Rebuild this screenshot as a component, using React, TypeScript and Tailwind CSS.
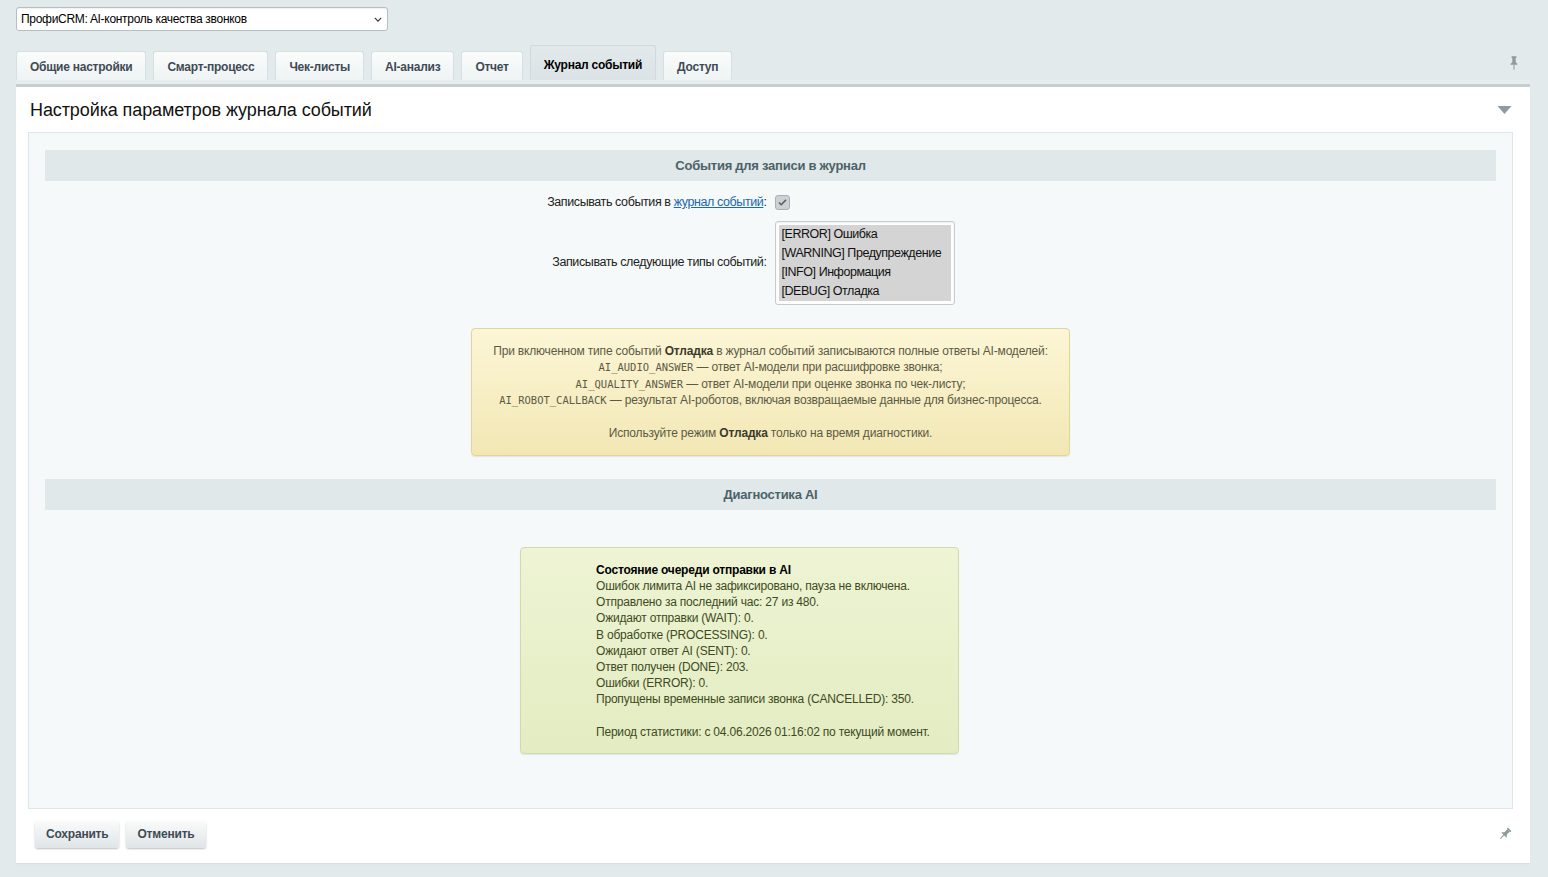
import React from "react";

const tabs = [
  "Общие настройки",
  "Смарт-процесс",
  "Чек-листы",
  "AI-анализ",
  "Отчет",
  "Журнал событий",
  "Доступ",
];

const eventTypes = [
  "[ERROR] Ошибка",
  "[WARNING] Предупреждение",
  "[INFO] Информация",
  "[DEBUG] Отладка",
];

const queueLines = [
  "Ошибок лимита AI не зафиксировано, пауза не включена.",
  "Отправлено за последний час: 27 из 480.",
  "Ожидают отправки (WAIT): 0.",
  "В обработке (PROCESSING): 0.",
  "Ожидают ответ AI (SENT): 0.",
  "Ответ получен (DONE): 203.",
  "Ошибки (ERROR): 0.",
  "Пропущены временные записи звонка (CANCELLED): 350.",
];

function PinIcon({ className }: { className?: string }) {
  return (
    <svg viewBox="0 0 12 16" className={className} fill="currentColor">
      <rect x="3" y="0" width="6" height="2" rx="0.5" />
      <path d="M4 2h4v5l2 2v1H2V9l2-2z" />
      <rect x="5.4" y="10" width="1.2" height="6" />
    </svg>
  );
}

function SectionHeader({ title }: { title: string }) {
  return (
    <div className="flex h-[31px] items-center justify-center bg-[#e0e8ea] text-[13px] font-bold tracking-[-0.25px] text-[#4b6267]">
      {title}
    </div>
  );
}

const mono = "font-['DejaVu_Sans_Mono',monospace] text-[10.5px] tracking-normal";

export default function App() {
  return (
    <div className="min-h-screen bg-[#e3eaec] pl-4 pr-[18px] pt-[7px] pb-[15px] font-['Liberation_Sans',Arial,sans-serif] text-[#000]">
      {/* module selector */}
      <div className="relative flex h-[24px] w-[372px] items-center rounded-[3px] border border-[#b5bfc3] bg-white pl-[4px] text-[12px] shadow-[inset_0_1px_1px_rgba(0,0,0,0.06)]">
        <span className="tracking-[-0.3px]">ПрофиCRM: AI-контроль качества звонков</span>
        <svg viewBox="0 0 10 6" className="absolute right-[5px] top-[9px] h-[5px] w-[8px] text-[#333]" fill="none" stroke="currentColor" strokeWidth="1.4">
          <path d="M1 1l4 4 4-4" />
        </svg>
      </div>

      {/* tabs */}
      <div className="mt-[14px] flex items-end">
        <div className="flex items-end gap-[7px]">
          {tabs.map((t) => {
            const active = t === "Журнал событий";
            return (
              <div
                key={t}
                className={
                  active
                    ? "flex h-[35px] items-center rounded-t-[3px] border border-b-0 border-[#d0d9dc] bg-gradient-to-b from-[#e3e9eb] to-[#dbe3e6] px-[13px] pt-[4px] text-[12px] font-bold tracking-[-0.25px] text-black"
                    : "flex h-[29px] items-center rounded-t-[3px] border border-b-0 border-[#d6dfe2] bg-gradient-to-b from-[#fbfcfc] to-[#eef3f4] px-[13px] pt-[1px] text-[12px] font-bold tracking-[-0.25px] text-[#3f4b54]"
                }
              >
                {t}
              </div>
            );
          })}
        </div>
        <div className="flex-1" />
        <PinIcon className="mb-[10px] mr-[11px] h-[14px] w-[10px] text-[#8d999d]" />
      </div>

      {/* main panel */}
      <div className="h-[4px] bg-[#e8eef0]" />
      <div className="border-t-[3px] border-[#c5cfd2] bg-white pb-[15px] shadow-[0_1px_1px_rgba(0,0,0,0.05)]">
        <div className="flex items-center justify-between pl-[14px] pr-[18px] pt-[11px] pb-[10px]">
          <h1 className="text-[18px] leading-[24px] tracking-[-0.1px] text-[#111]">
            Настройка параметров журнала событий
          </h1>
          <svg viewBox="0 0 14 8" className="h-[8px] w-[15px] text-[#8e9ba0]" fill="currentColor">
            <path d="M0 0h14L7 8z" />
          </svg>
        </div>

        <div className="mx-[12px] mr-[17px] border border-[#dde6e8] bg-[#f5f9f9] px-[16px] pt-[17px] pb-[54px]">
          <SectionHeader title="События для записи в журнал" />

          <div className="mt-[12px] grid grid-cols-[1fr_1fr] items-center gap-x-[8px] text-[12.5px] tracking-[-0.4px] text-[#222]">
            <div className="text-right">
              Записывать события в{" "}
              <a href="#" className="text-[#2067b0] underline">
                журнал событий
              </a>
              :
            </div>
            <div className="flex items-center">
              <span className="flex h-[15px] w-[15px] items-center justify-center rounded-[3px] border border-[#a9b1b4] bg-[#cdd1d3]">
                <svg viewBox="0 0 10 8" className="h-[7px] w-[9px] text-[#555c60]" fill="none" stroke="currentColor" strokeWidth="1.7">
                  <path d="M1 4l2.5 2.5L9 1" />
                </svg>
              </span>
            </div>

            <div className="mt-[9px] text-right">Записывать следующие типы событий:</div>
            <div className="mt-[9px]">
              <div className="w-[180px] rounded-[3px] border border-[#c5ccce] bg-white p-[3px] shadow-[inset_0_1px_2px_rgba(0,0,0,0.08)]">
                <div className="whitespace-nowrap bg-[#d4d4d4] pl-[3px] text-[12.5px] leading-[19px] tracking-[-0.45px] text-[#111]">
                  {eventTypes.map((e) => (
                    <div key={e}>{e}</div>
                  ))}
                </div>
              </div>
            </div>
          </div>

          <div className="mt-[23px] flex justify-center">
            <div className="w-[599px] rounded-[4px] border border-[#e2d59a] bg-gradient-to-b from-[#fcf6d6] to-[#f2e7b4] pt-[14px] pb-[13px] text-center text-[12px] leading-[16.5px] tracking-[-0.18px] text-[#5c5a45] shadow-[0_1px_1px_rgba(0,0,0,0.08)]">
              <div>
                При включенном типе событий <b className="text-[#3d3b2c]">Отладка</b> в журнал событий записываются полные ответы AI-моделей:
              </div>
              <div>
                <code className={mono}>AI_AUDIO_ANSWER</code> — ответ AI-модели при расшифровке звонка;
              </div>
              <div>
                <code className={mono}>AI_QUALITY_ANSWER</code> — ответ AI-модели при оценке звонка по чек-листу;
              </div>
              <div>
                <code className={mono}>AI_ROBOT_CALLBACK</code> — результат AI-роботов, включая возвращаемые данные для бизнес-процесса.
              </div>
              <div className="h-[16.5px]" />
              <div>
                Используйте режим <b className="text-[#3d3b2c]">Отладка</b> только на время диагностики.
              </div>
            </div>
          </div>

          <div className="mt-[23px]">
            <SectionHeader title="Диагностика AI" />
          </div>

          <div className="mt-[37px] pl-[475px]">
            <div className="w-[439px] rounded-[4px] border border-[#cfdcaa] bg-gradient-to-b from-[#eef4d4] to-[#e3ecc2] pl-[75px] pt-[14px] pb-[13px] text-[12px] leading-[16.2px] tracking-[-0.2px] text-[#3e4a22] shadow-[0_1px_1px_rgba(0,0,0,0.08)]">
              <div className="font-bold text-black">Состояние очереди отправки в AI</div>
              {queueLines.map((l) => (
                <div key={l}>{l}</div>
              ))}
              <div className="h-[16.2px]" />
              <div>Период статистики: с 04.06.2026 01:16:02 по текущий момент.</div>
            </div>
          </div>
        </div>

        <div className="mt-[12px] flex items-center pl-[19px] pr-[20px]">
          <div className="flex gap-[7px]">
            <button className="h-[27px] rounded-[3px] bg-gradient-to-b from-[#fafbfb] to-[#dfe5e7] px-[11px] text-[12px] font-bold tracking-[-0.2px] text-[#3f4b54] shadow-[0_1px_2px_rgba(0,0,0,0.25)]">
              Сохранить
            </button>
            <button className="h-[27px] rounded-[3px] bg-gradient-to-b from-[#fafbfb] to-[#dfe5e7] px-[11px] text-[12px] font-bold tracking-[-0.2px] text-[#3f4b54] shadow-[0_1px_2px_rgba(0,0,0,0.25)]">
              Отменить
            </button>
          </div>
          <div className="flex-1" />
          <PinIcon className="h-[14px] w-[10px] rotate-45 text-[#8d999d]" />
        </div>
      </div>
    </div>
  );
}
